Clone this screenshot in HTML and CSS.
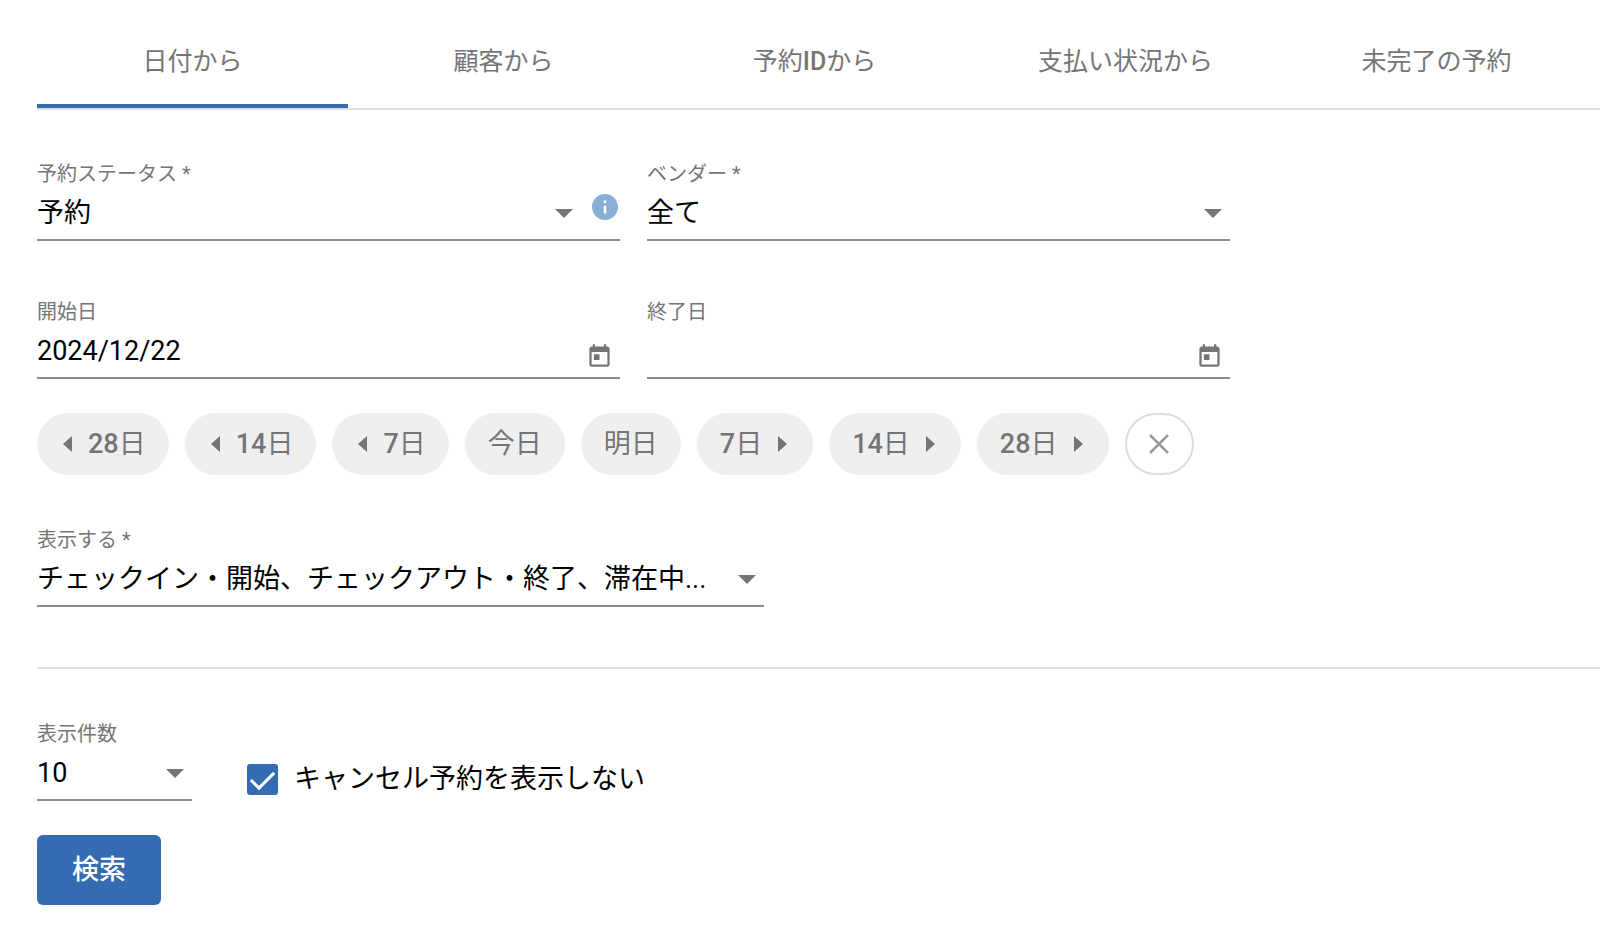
FILE: index.html
```
<!DOCTYPE html>
<html lang="ja">
<head>
<meta charset="UTF-8">
<meta name="viewport" content="width=device-width, initial-scale=1.0">
<title>予約検索</title>
<link rel="stylesheet" href="styles.css">
</head>
<body>
  <div class="search-page">
    <nav class="tabs">
      <a href="#date" class="tab active">日付から</a>
      <a href="#customer" class="tab">顧客から</a>
      <a href="#booking-id" class="tab"><span>予約<b>ID</b>から</span></a>
      <a href="#payment" class="tab">支払い状況から</a>
      <a href="#incomplete" class="tab">未完了の予約</a>
    </nav>

    <form id="searchForm">
      <div class="field-row">
        <div class="field">
          <label for="status">予約ステータス *</label>
          <div class="control select-control has-info">
            <select id="status" name="status">
              <option>予約</option>
            </select>
            <svg class="info-icon" viewBox="2 2 20 20" aria-hidden="true"><path d="M12 2C6.480 2 2 6.480 2 12s4.480 10 10 10 10-4.480 10-10S17.520 2 12 2zm1 15h-2v-6h2v6zm0-8h-2V7h2v2z"/></svg>
          </div>
        </div>
        <div class="field">
          <label for="vendor">ベンダー *</label>
          <div class="control select-control">
            <select id="vendor" name="vendor">
              <option>全て</option>
            </select>
          </div>
        </div>
      </div>

      <div class="field-row date-row">
        <div class="field">
          <label for="startDate">開始日</label>
          <div class="control">
            <input type="text" id="startDate" name="startDate" value="2024/12/22">
            <svg class="calendar-icon" viewBox="0 0 24 24" aria-hidden="true"><path d="M19 3h-1V1h-2v2H8V1H6v2H5c-1.110 0-1.990.9-1.990 2L3 19c0 1.100.890 2 2 2h14c1.100 0 2-.9 2-2V5c0-1.100-.9-2-2-2zm0 16H5V8h14v11zM7 10h5v5H7z"/></svg>
          </div>
        </div>
        <div class="field">
          <label for="endDate">終了日</label>
          <div class="control">
            <input type="text" id="endDate" name="endDate">
            <svg class="calendar-icon" viewBox="0 0 24 24" aria-hidden="true"><path d="M19 3h-1V1h-2v2H8V1H6v2H5c-1.110 0-1.990.9-1.990 2L3 19c0 1.100.890 2 2 2h14c1.100 0 2-.9 2-2V5c0-1.100-.9-2-2-2zm0 16H5V8h14v11zM7 10h5v5H7z"/></svg>
          </div>
        </div>
      </div>

      <div class="chips">
        <button type="button" class="chip prev"><span><b>28</b>日</span></button>
        <button type="button" class="chip prev"><span><b>14</b>日</span></button>
        <button type="button" class="chip prev"><span><b>7</b>日</span></button>
        <button type="button" class="chip"><span>今日</span></button>
        <button type="button" class="chip"><span>明日</span></button>
        <button type="button" class="chip next"><span><b>7</b>日</span></button>
        <button type="button" class="chip next"><span><b>14</b>日</span></button>
        <button type="button" class="chip next"><span><b>28</b>日</span></button>
        <button type="button" class="chip clear" aria-label="クリア">
          <svg viewBox="0 0 20 20" aria-hidden="true"><path d="M1 1l18 18M19 1L1 19"/></svg>
        </button>
      </div>

      <div class="field show-field">
        <label for="show">表示する *</label>
        <div class="control select-control">
          <select id="show" name="show">
            <option>チェックイン・開始、チェックアウト・終了、滞在中...</option>
          </select>
        </div>
      </div>

      <hr>

      <div class="count-row">
        <div class="field count-field">
          <label for="count">表示件数</label>
          <div class="control select-control">
            <select id="count" name="count">
              <option>10</option>
            </select>
          </div>
        </div>
        <label class="check" for="hideCancelled">
          <input type="checkbox" id="hideCancelled" name="hideCancelled" checked>
          <span>キャンセル予約を表示しない</span>
        </label>
      </div>

      <button type="submit">検索</button>
    </form>
  </div>
</body>
</html>
```

FILE: styles.css
```
* {
  box-sizing: border-box;
}

body {
  margin: 0;
  background-color: #fff;
  color: #000;
  font-family: Roboto, "Noto Sans CJK JP", sans-serif;
  font-size: 27px;
}

b {
  font-weight: 500;
}

.search-page {
  padding-left: 37px;
}

/* Tabs */
.tabs {
  display: grid;
  grid-template-columns: repeat(5, 1fr);
  padding-right: 8px;
  border-bottom: 2px solid #e0e0e0;
}

.tab {
  display: flex;
  justify-content: center;
  align-items: center;
  height: 108px;
  padding-top: 14px;
  border-bottom: 4px solid transparent;
  color: #757575;
  font-size: 25px;
  text-decoration: none;
}

.tab.active {
  border-bottom-color: #346bb1;
}

/* Fields */
.field-row {
  display: grid;
  grid-template-columns: 1fr 1fr;
  gap: 27px;
  max-width: 1193px;
  margin-top: 52px;
}

.date-row {
  margin-top: 59px;
}

.field label {
  display: block;
  color: #757575;
  font-size: 20px;
  line-height: 24px;
}

.control {
  position: relative;
  display: flex;
  height: 55px;
  border-bottom: 2px solid #8c8c8c;
}

select,
input[type="text"] {
  appearance: none;
  width: 100%;
  padding: 0;
  border: none;
  border-radius: 0;
  outline: none;
  background: transparent;
  color: #000;
  font-family: inherit;
  font-size: 27px;
}

.select-control::after {
  content: "";
  position: absolute;
  top: 23px;
  right: 8px;
  border: 9px solid transparent;
  border-top-color: #757575;
  border-bottom: none;
  pointer-events: none;
}

.has-info::after {
  right: 47px;
}

.info-icon {
  position: absolute;
  top: 8px;
  right: 2px;
  width: 26px;
  height: 26px;
  fill: #8aafd6;
}

.calendar-icon {
  position: absolute;
  top: 19px;
  right: 7px;
  width: 27px;
  height: 27px;
  fill: #757575;
}

/* Date shortcuts */
.chips {
  display: flex;
  flex-wrap: wrap;
  gap: 16px;
  margin-top: 34px;
}

.chip {
  display: flex;
  justify-content: center;
  align-items: center;
  gap: 16px;
  height: 62px;
  padding: 0 23px;
  border: none;
  border-radius: 31px;
  background-color: #efefef;
  color: #757575;
  font-family: inherit;
  font-size: 27px;
  cursor: pointer;
}

.chip span,
.check span {
  padding-bottom: 5px;
}

.chip.prev {
  padding-left: 26px;
}

.chip.next {
  padding-right: 26px;
}

.chip.prev::before,
.chip.next::after {
  content: "";
  border: 8px solid transparent;
}

.chip.prev::before {
  border-left: none;
  border-right: 9px solid #757575;
}

.chip.next::after {
  border-right: none;
  border-left: 9px solid #757575;
}

.chip.clear {
  width: 69px;
  padding: 0;
  border: 2px solid #dcdcdc;
  background-color: #fff;
}

.chip.clear svg {
  width: 20px;
  height: 20px;
  fill: none;
  stroke: #9a9a9a;
  stroke-width: 2.5;
}

.show-field {
  max-width: 727px;
  margin-top: 53px;
}

hr {
  margin: 60px 0 53px;
  border: none;
  border-top: 2px solid #e0e0e0;
}

/* Result options */
.count-row {
  display: flex;
  align-items: flex-end;
  gap: 55px;
}

.count-field {
  width: 155px;
}

.check {
  display: flex;
  align-items: center;
  gap: 16px;
  height: 44px;
}

.check input {
  appearance: none;
  display: flex;
  justify-content: center;
  width: 31px;
  height: 31px;
  margin: 0;
  border-radius: 3px;
}

.check input:checked {
  background-color: #346bb1;
}

.check input:checked::after {
  content: "";
  width: 10px;
  height: 20px;
  margin-top: 2px;
  border: solid #fff;
  border-width: 0 3px 3px 0;
  transform: rotate(45deg);
}

button[type="submit"] {
  height: 70px;
  margin: 34px 0 20px;
  padding: 0 35px 6px;
  border: none;
  border-radius: 6px;
  background-color: #346bb1;
  color: #fff;
  font-family: inherit;
  font-size: 27px;
  font-weight: 500;
  cursor: pointer;
}
```
